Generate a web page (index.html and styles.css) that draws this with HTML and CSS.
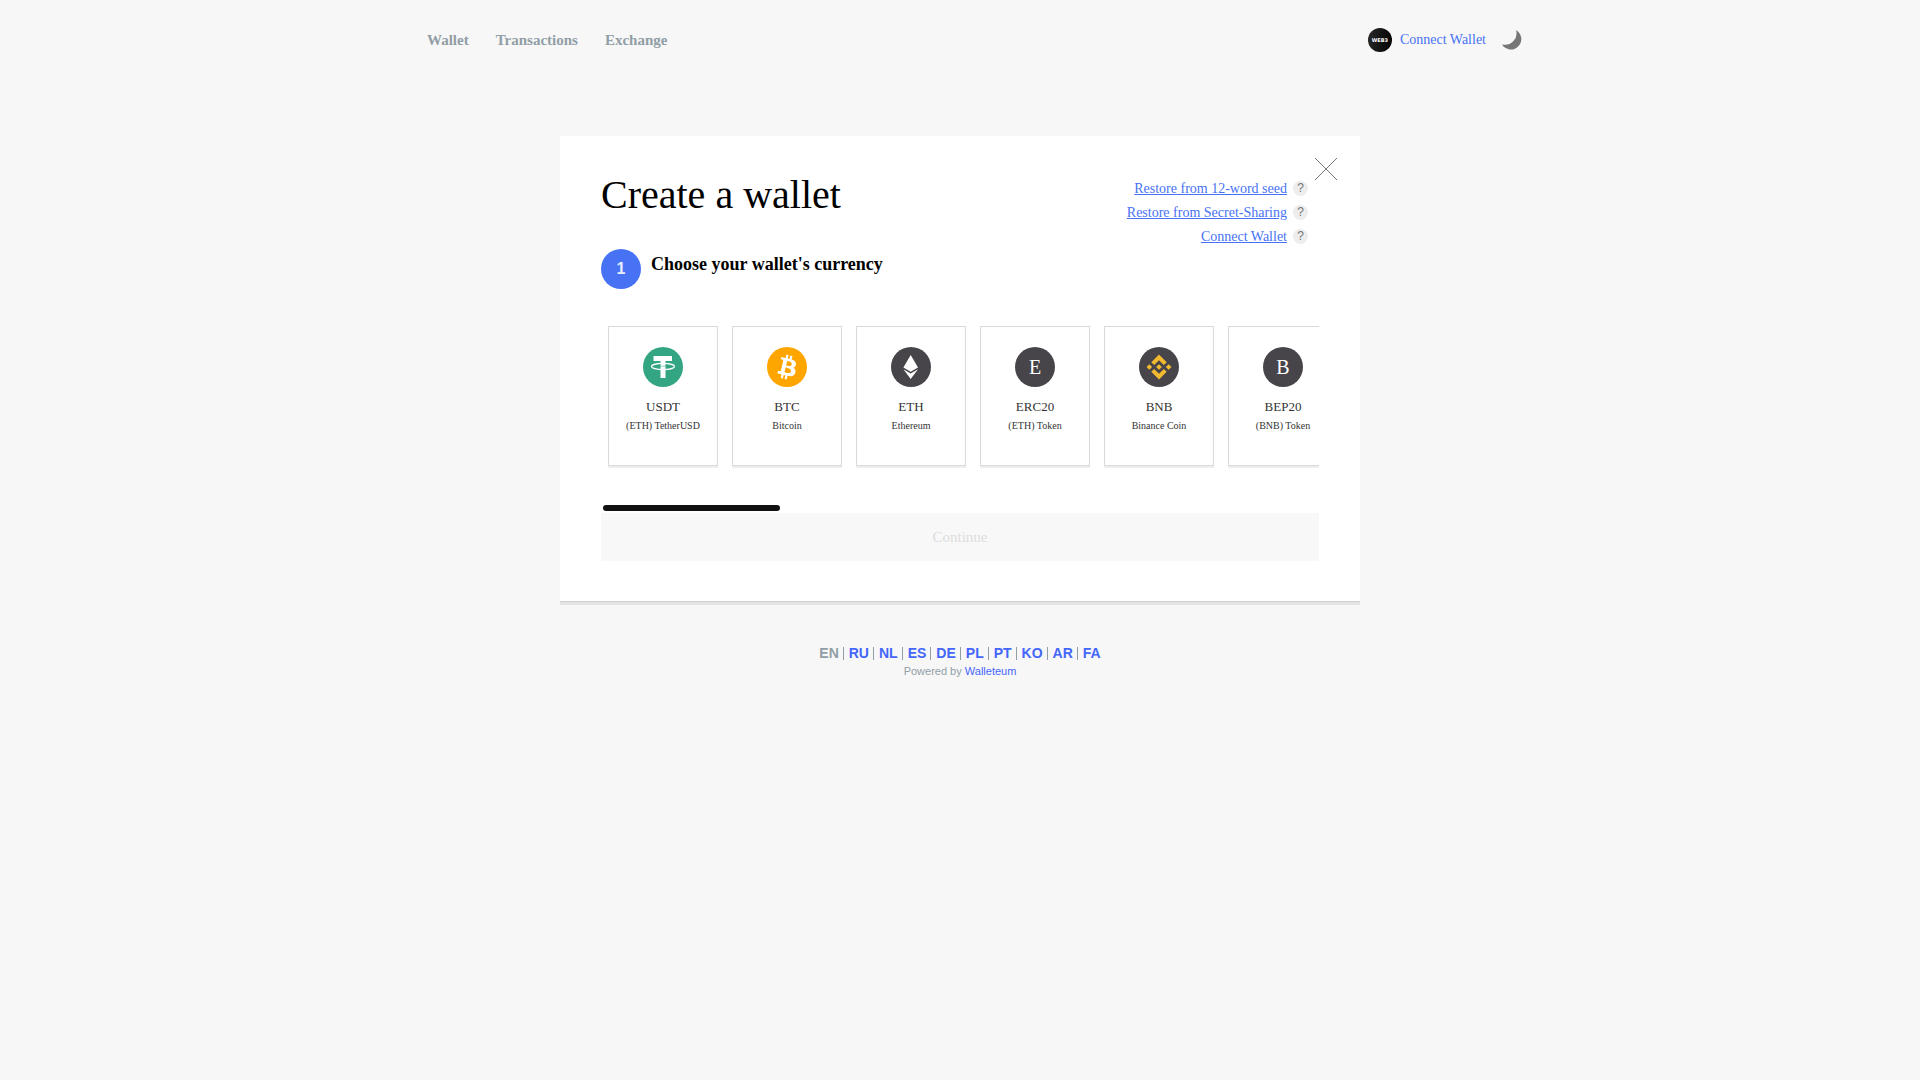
FILE: index.html
```html
<!DOCTYPE html>
<html lang="en">
<head>
<meta charset="utf-8">
<meta name="viewport" content="width=device-width, initial-scale=1">
<title>Create a wallet</title>
<link rel="stylesheet" href="styles.css">
</head>
<body>
<header class="topbar">
  <nav class="menu">
    <a href="#wallet">Wallet</a>
    <a href="#transactions">Transactions</a>
    <a href="#exchange">Exchange</a>
  </nav>
  <div class="account">
    <a class="connect" href="#connect"><span class="web3">WEB3</span>Connect Wallet</a>
    <button class="theme" type="button" aria-label="Dark mode">
      <svg viewBox="0 0 20 20" width="20" height="20"><path d="M14 0 A10.4 10.4 0 1 1 0 14.4 A11.5 11.5 0 0 0 14 0Z" fill="#777"/></svg>
    </button>
  </div>
</header>

<main class="card">
  <button class="close" type="button" aria-label="Close">
    <svg viewBox="0 0 22 22" width="22" height="22"><path d="M0 0L22 22M22 0L0 22" stroke="#777" stroke-width="1"/></svg>
  </button>
  <div class="card-head">
    <h1>Create a wallet</h1>
    <ul class="restore">
      <li><a href="#seed">Restore from 12-word seed</a><span class="help">?</span></li>
      <li><a href="#sharing">Restore from Secret-Sharing</a><span class="help">?</span></li>
      <li><a href="#connect">Connect Wallet</a><span class="help">?</span></li>
    </ul>
  </div>
  <div class="step">
    <span class="step-number">1</span>
    <h2>Choose your wallet's currency</h2>
  </div>
  <div class="slider">
    <button class="coin" type="button">
      <span class="logo usdt"><svg viewBox="0 0 40 40" width="40" height="40"><path d="M10.5 9H29V14H22.5V31H17.500V14H10.500Z" fill="#fff"/><ellipse cx="20" cy="19.500" rx="11.500" ry="3.100" fill="none" stroke="#fff" stroke-width="1.200"/><path d="M17.500 17.500V19.200H22.500V17.500" fill="#fff" stroke="#34a582" stroke-width=".5"/></svg></span>
      <span class="code">USDT</span><span class="name">(ETH) TetherUSD</span>
    </button>
    <button class="coin" type="button">
      <span class="logo btc"><svg viewBox="0 0 32 32" width="40" height="40"><path fill="#fff" d="M23.189 14.020c.314-2.096-1.283-3.223-3.465-3.975l.708-2.840-1.728-.430-.690 2.765c-.454-.114-.920-.220-1.385-.326l.695-2.783L15.596 6l-.708 2.839c-.376-.086-.746-.170-1.104-.260l.002-.009-2.384-.595-.460 1.846s1.283.294 1.256.312c.700.175.826.638.805 1.006l-.806 3.235c.048.012.110.030.180.057l-.183-.045-1.130 4.532c-.086.212-.303.531-.793.410.018.025-1.256-.313-1.256-.313l-.858 1.978 2.250.561c.418.105.828.215 1.231.318l-.715 2.872 1.727.430.708-2.840c.472.127.930.245 1.378.357l-.706 2.828 1.728.430.715-2.866c2.948.558 5.164.333 6.097-2.333.752-2.146-.037-3.385-1.588-4.192 1.130-.260 1.980-1.003 2.207-2.538zm-3.950 5.538c-.533 2.147-4.148.986-5.320.695l.950-3.805c1.172.293 4.929.872 4.370 3.110zm.535-5.569c-.487 1.953-3.495.960-4.470.717l.860-3.450c.975.243 4.118.696 3.610 2.733z"/></svg></span>
      <span class="code">BTC</span><span class="name">Bitcoin</span>
    </button>
    <button class="coin" type="button">
      <span class="logo"><svg viewBox="0 0 40 40" width="40" height="40"><path d="M19.700 8L27 20.600L19.700 24.800L12.400 20.600ZM19.700 26.400L27 22.200L19.700 32L12.400 22.200Z" fill="#fff"/></svg></span>
      <span class="code">ETH</span><span class="name">Ethereum</span>
    </button>
    <button class="coin" type="button">
      <span class="logo">E</span>
      <span class="code">ERC20</span><span class="name">(ETH) Token</span>
    </button>
    <button class="coin" type="button">
      <span class="logo"><svg viewBox="0 0 32 32" width="40" height="40"><path fill="#f3ba2f" d="M12.116 14.404L16 10.520l3.886 3.886 2.260-2.260L16 6l-6.144 6.144 2.260 2.260zM6 16l2.260-2.260L10.520 16l-2.260 2.260L6 16zm6.116 1.596L16 21.480l3.886-3.886 2.260 2.259L16 26l-6.144-6.144-.003-.003 2.263-2.257zM21.480 16l2.260-2.260L26 16l-2.260 2.260L21.480 16zm-3.188-.002h.002V16L16 18.294l-2.291-2.290-.004-.004.004-.003.401-.402.195-.195L16 13.706l2.293 2.293z"/></svg></span>
      <span class="code">BNB</span><span class="name">Binance Coin</span>
    </button>
    <button class="coin" type="button">
      <span class="logo">B</span>
      <span class="code">BEP20</span><span class="name">(BNB) Token</span>
    </button>
  </div>
  <div class="track"><div class="thumb"></div></div>
  <button class="continue" type="button" disabled>Continue</button>
</main>

<footer class="footer">
  <ul class="langs">
    <li>EN</li>
    <li><a href="#ru">RU</a></li>
    <li><a href="#nl">NL</a></li>
    <li><a href="#es">ES</a></li>
    <li><a href="#de">DE</a></li>
    <li><a href="#pl">PL</a></li>
    <li><a href="#pt">PT</a></li>
    <li><a href="#ko">KO</a></li>
    <li><a href="#ar">AR</a></li>
    <li><a href="#fa">FA</a></li>
  </ul>
  <p>Powered by <a href="#walleteum">Walleteum</a></p>
</footer>
</body>
</html>
```
FILE: styles.css
```css
* { box-sizing: border-box; }
body {
  margin: 0;
  background: #f7f7f7;
  color: #000;
  font-family: "Liberation Serif", serif;
}
a { color: #4772f4; text-decoration: none; }
h1, h2, ul, p { margin: 0; padding: 0; font-weight: normal; }
ul { list-style: none; }
button { font-family: inherit; border: 0; padding: 0; background: none; cursor: pointer; }
svg { display: block; }

.topbar {
  display: flex;
  justify-content: space-between;
  align-items: center;
  max-width: 1140px;
  margin: 0 auto;
  padding: 28px 8px 28px 37px;
}
.menu { display: flex; gap: 27px; }
.menu a { color: #919ea6; font-size: 15px; line-height: 24px; font-weight: bold; }
.account { display: flex; align-items: center; gap: 16px; }
.connect { display: flex; align-items: center; gap: 8px; font-size: 14px; line-height: 24px; }
.web3 {
  width: 24px;
  border-radius: 50%;
  background: linear-gradient(100deg, #2b2b2b, #000);
  color: #fff;
  font: bold 5px/24px "DejaVu Sans", sans-serif;
  text-align: center;
}

.card {
  position: relative;
  max-width: 800px;
  margin: 56px auto 0;
  padding: 36px 41px 40px;
  background: #fff;
  box-shadow: 0 1px 0 #d0d0d0, 0 4px 0 #e3e3e3;
}
.close { position: absolute; top: 22px; right: 23px; }
.card-head { display: flex; justify-content: space-between; padding-right: 11px; }
.card-head h1 { font-size: 40px; line-height: 46px; }
.restore { padding-top: 5px; }
.restore li {
  display: flex;
  justify-content: flex-end;
  align-items: center;
  gap: 6px;
  font-size: 14px;
  line-height: 24px;
}
.restore a { text-decoration: underline; }
.help {
  width: 15px;
  margin-bottom: 2px;
  border-radius: 50%;
  background: #ededed;
  color: #777;
  font: 12px/15px "Liberation Sans", sans-serif;
  text-align: center;
}

.step { display: flex; gap: 10px; }
.step-number {
  width: 40px;
  border-radius: 50%;
  background: #4772f4;
  color: #e9eefe;
  font: bold 16px/40px "Liberation Sans", sans-serif;
  text-align: center;
}
.step h2 { padding-top: 3px; font-size: 18px; line-height: 24px; font-weight: bold; }

.slider { display: flex; gap: 14px; padding: 37px 7px 39px; overflow: hidden; }
.coin {
  display: flex;
  flex: 0 0 110px;
  flex-direction: column;
  align-items: center;
  padding: 20px 0 27px;
  border: 1px solid #d9dada;
  background: #fff;
  box-shadow: 0 2px 0 #eee;
  color: #333;
}
.logo {
  width: 40px;
  height: 40px;
  margin-bottom: 10px;
  border-radius: 50%;
  background: #47454a;
  color: #fff;
  font-size: 20px;
  line-height: 40px;
}
.usdt { background: #34a582; }
.btc { background: #ffa500; }
.code { font-size: 13px; line-height: 20px; }
.name { padding-bottom: 3px; font-size: 10px; line-height: 18px; }
.track { padding: 0 2px 2px; }
.thumb { width: calc(25% - 2px); height: 6px; border-radius: 3px; background: #111; }
.continue {
  display: block;
  width: 100%;
  background: #f8f8f8;
  color: #ddd;
  font-size: 15px;
  line-height: 48px;
}

.footer {
  padding: 42px 0 28px;
  color: #919ea6;
  font-family: "Liberation Sans", sans-serif;
  text-align: center;
}
.langs { display: flex; justify-content: center; align-items: center; font-size: 14px; line-height: 20px; font-weight: bold; }
.langs li { display: flex; align-items: center; }
.langs li + li::before { content: ""; width: 1px; height: 13px; margin: 0 5px 0 4px; background: #919ea6; }
.footer a { color: #4466fa; }
.footer p { font-size: 11px; line-height: 16px; }
```
